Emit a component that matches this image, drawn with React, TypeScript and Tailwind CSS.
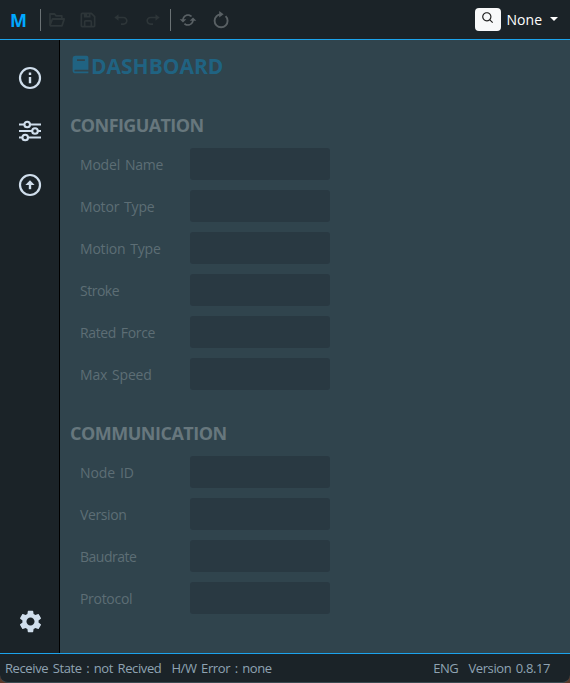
import { BiUndo, BiRedo, BiRefresh, BiSave, BiSolidBook, BiSearch } from "react-icons/bi";
import { MdSettings } from "react-icons/md";

const font = "font-['Open_Sans','Noto_Sans',sans-serif]";

type Field = { label: string; cls: string };

function FolderIcon({ className }: { className: string }) {
  return (
    <svg viewBox="0 0 16 14" className={className} fill="none" stroke="currentColor" strokeWidth="1.8" strokeLinejoin="round">
      <path d="M1 12.2V1h4.6l1.6 1.8h5.6v3M1 12.2 3.4 6h11.8l-2.2 6.8H1.6Z" />
    </svg>
  );
}

function ReloadIcon({ className }: { className: string }) {
  return (
    <svg viewBox="0 0 18 18" className={className} fill="none" stroke="currentColor" strokeWidth="1.9">
      <path d="M13.6 5.1A6.5 6.5 0 1 1 4.6 5.1Q6.3 3.5 8.6 3.4" />
      <path d="M7.2 0v6.6L11.6 3.3Z" fill="currentColor" stroke="none" />
    </svg>
  );
}

function InfoIcon({ className }: { className: string }) {
  return (
    <svg viewBox="0 0 26 26" className={className} fill="none" stroke="currentColor" strokeWidth="2.2">
      <circle cx="13" cy="13" r="10" />
      <path d="M13 12v6.2M13 7.6v2.5" strokeWidth="2.4" />
    </svg>
  );
}

function SlidersIcon({ className }: { className: string }) {
  return (
    <svg viewBox="0 0 26 26" className={className} fill="none" stroke="currentColor" strokeWidth="2.1">
      <path d="M2 6.5h5.2M13.2 6.5H24M2 13h13M21 13h3M2 19.5h3.2M11.2 19.5H24" />
      <circle cx="10.2" cy="6.5" r="2.8" />
      <circle cx="18" cy="13" r="2.8" />
      <circle cx="8.2" cy="19.5" r="2.8" />
    </svg>
  );
}

function UploadIcon({ className }: { className: string }) {
  return (
    <svg viewBox="0 0 26 26" className={className} fill="none" stroke="currentColor" strokeWidth="2.2">
      <circle cx="13" cy="13" r="10" />
      <path d="M13 17.2V12" strokeWidth="2.4" />
      <path d="M8.4 13 13 8.3l4.6 4.7Z" fill="currentColor" stroke="none" />
    </svg>
  );
}

function Section({ title, cls, fields }: { title: string; cls: string; fields: Field[] }) {
  return (
    <section>
      <h2 className={`h-8 pl-[10px] text-lg leading-[30px] font-bold whitespace-nowrap text-[#67777d] ${cls}`}>{title}</h2>
      <div className="flex flex-col gap-[10px] pt-[6px] pl-5">
        {fields.map((f) => (
          <div key={f.label} className="flex h-8 items-center">
            <span className={`w-[110px] pt-[2px] text-sm whitespace-nowrap text-[#5d6e75] ${f.cls}`}>{f.label}</span>
            <span className="h-8 w-[140px] rounded-[3px] bg-[#293942]" />
          </div>
        ))}
      </div>
    </section>
  );
}

export default function App() {
  return (
    <div className="h-[683px] w-[570px] overflow-hidden bg-[#5b3a2c]">
      <div className={`flex h-full flex-col overflow-hidden rounded-b-lg border-b border-[#3b4a50] bg-[#1b2328] ${font}`}>
        <header className="flex h-10 shrink-0 items-center border-b border-[#1ca3ec] text-[#2d3538]">
          <span className="w-10 pl-[10px] pt-px text-lg font-bold text-[#00a8ff]">M</span>
          <span className="h-[22px] w-px bg-[#6b7275]" />
          <FolderIcon className="ml-[8px] h-[14px] w-4" />
          <BiSave className="ml-[13px] size-5" />
          <BiUndo className="ml-[13px] size-5" />
          <BiRedo className="ml-3 size-5" />
          <span className="ml-[7px] h-[22px] w-px bg-[#6b7275]" />
          <BiRefresh className="ml-[7px] size-5 text-[#596064]" />
          <ReloadIcon className="ml-[14px] size-[18px] text-[#596064]" />
          <span className="ml-auto flex h-[23px] w-[26px] items-center justify-center rounded bg-[#f8f9fa] text-[#222]">
            <BiSearch className="mb-[3px] size-[14px]" />
          </span>
          <span className="ml-[6px] pt-px text-sm text-white">None</span>
          <span className="mr-3 mb-0.5 ml-2 border-x-4 border-t-4 border-x-transparent border-t-white" />
        </header>
        <div className="flex min-h-0 flex-1">
          <nav className="flex w-[60px] shrink-0 flex-col items-center border-r border-black pt-[25px] pb-[18px] pl-px text-[#d0deec]">
            <InfoIcon className="size-[26px]" />
            <SlidersIcon className="mt-[27px] size-[26px]" />
            <UploadIcon className="mt-[28px] size-[26px]" />
            <MdSettings className="mt-auto size-[27px]" />
          </nav>
          <main className="flex-1 bg-[#30444d]">
            <h1 className="flex h-[70px] items-start pt-[14px] pl-[10px] text-[21px] leading-[25px] font-bold text-[#206382]">
              <BiSolidBook className="size-[21px]" />
              <span>DASHBOARD</span>
            </h1>
            <Section
              title="CONFIGUATION"
              cls="tracking-[-0.6px]"
              fields={[
                { label: "Model Name", cls: "tracking-[-0.2px] [word-spacing:1.5px]" },
                { label: "Motor Type", cls: "tracking-[-0.2px] [word-spacing:1.5px]" },
                { label: "Motion Type", cls: "tracking-[-0.2px] [word-spacing:1.5px]" },
                { label: "Stroke", cls: "tracking-[-0.5px]" },
                { label: "Rated Force", cls: "tracking-[-0.35px] [word-spacing:1.5px]" },
                { label: "Max Speed", cls: "tracking-[-0.2px] [word-spacing:1.5px]" },
              ]}
            />
            <div className="h-[28px]" />
            <Section
              title="COMMUNICATION"
              cls="tracking-[-0.5px]"
              fields={[
                { label: "Node ID", cls: "tracking-[-0.1px] [word-spacing:1.5px]" },
                { label: "Version", cls: "tracking-[-0.4px]" },
                { label: "Baudrate", cls: "tracking-[-0.5px]" },
                { label: "Protocol", cls: "tracking-[-0.3px]" },
              ]}
            />
          </main>
        </div>
        <footer className="flex h-[29px] shrink-0 items-center border-t border-[#1ca3ec] pt-[2px] pr-5 pl-[5px] text-[13px] tracking-[-0.4px] whitespace-nowrap text-[#8fa3b3] [word-spacing:1.6px]">
          <span>Receive State : not Recived</span>
          <span className="ml-[10px]">H/W Error : none</span>
          <span className="ml-auto">ENG</span>
          <span className="ml-[10px]">Version 0.8.17</span>
        </footer>
      </div>
    </div>
  );
}
